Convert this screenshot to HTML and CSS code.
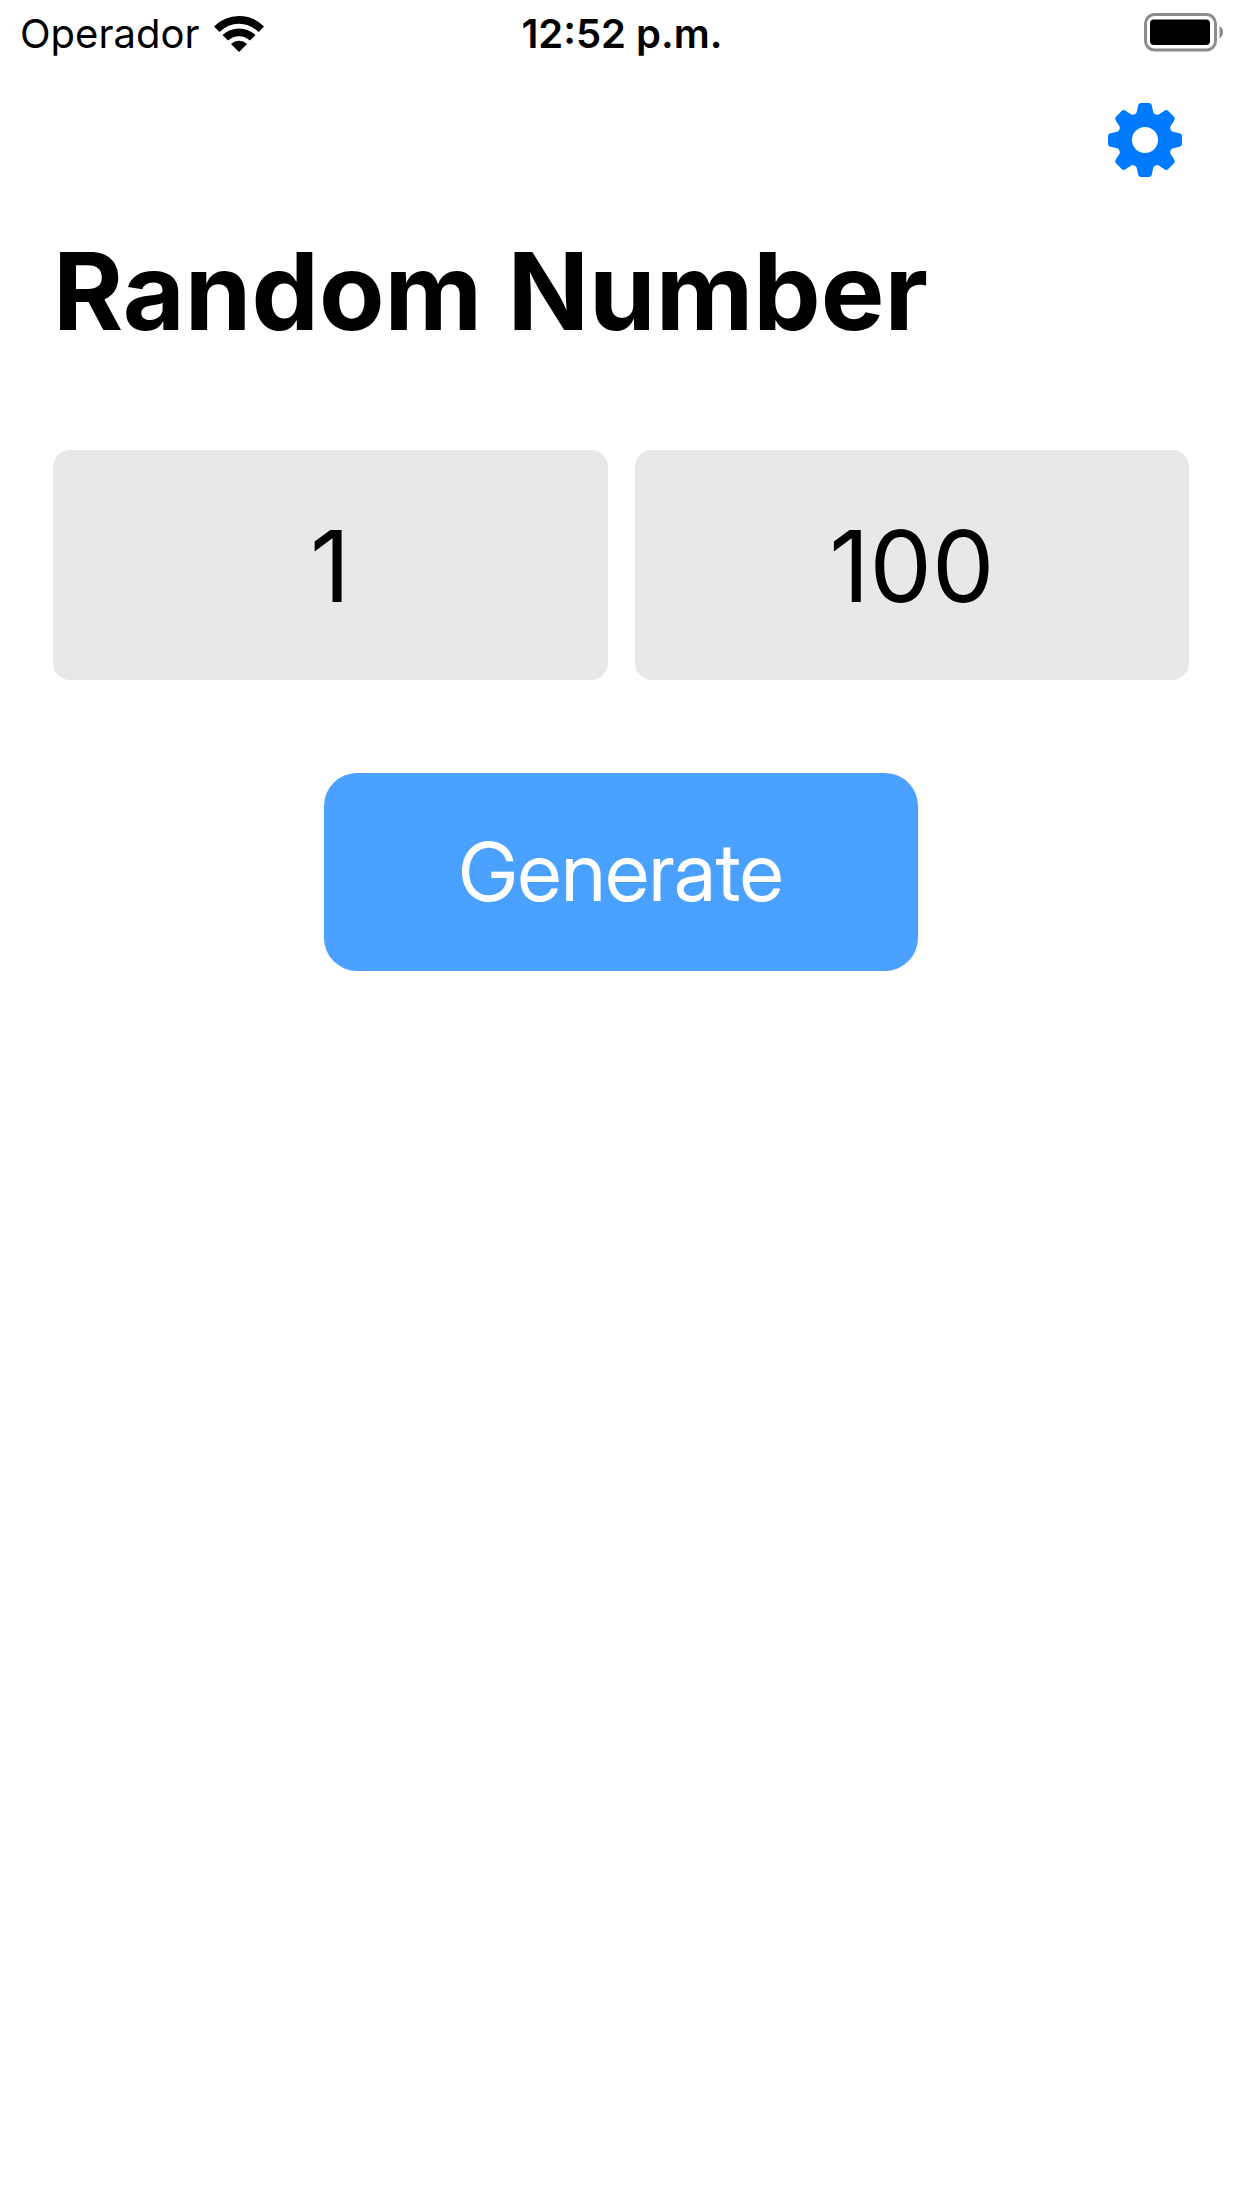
FILE: index.html
```html
<!DOCTYPE html>
<html lang="en">
<head>
  <meta charset="utf-8">
  <meta name="viewport" content="width=device-width, initial-scale=1">
  <title>Random Number</title>
  <link rel="stylesheet" href="styles.css">
</head>
<body>
  <header class="status-bar">
    <div class="carrier">
      <span>Operador</span>
      <svg class="wifi" viewBox="0 0 50 38" aria-hidden="true">
        <path d="M0 11.500 Q10.500 1 25 1 T50 11.500 L44.500 17 Q36 8.800 25 8.800 T5.500 17 Z"/>
        <path d="M8.500 20 Q15.500 13.500 25 13.500 T41.500 20 L36 25.500 Q31 21.200 25 21.200 T14 25.500 Z"/>
        <path d="M17 29 Q20.500 25.800 25 25.800 T33 29 L25 37 Z"/>
      </svg>
    </div>
    <time class="clock">12:52 p.m.</time>
    <svg class="battery" viewBox="0 0 80 42" role="img" aria-label="Battery full">
      <rect x="1.500" y="1.500" width="70" height="35.500" rx="9" fill="none" stroke="#8c8c8c" stroke-width="3"/>
      <rect x="6" y="6.500" width="60" height="25.500" rx="4"/>
      <path d="M75.500 13 Q79 15 79 19 T75.500 25.500 Z" fill="#8c8c8c"/>
    </svg>
  </header>

  <nav class="toolbar">
    <button class="settings" type="button" aria-label="Settings">
      <svg class="gear" viewBox="-37 -37 74 74" aria-hidden="true">
        <defs>
          <path id="tooth" d="M-12 -25 Q-8.500 -25.500 -8 -29 L-6.800 -34.800 Q-6.200 -37 -4 -37 H4 Q6.200 -37 6.800 -34.800 L8 -29 Q8.500 -25.500 12 -25 L8 -18 H-8 Z"/>
        </defs>
        <circle r="20" fill="none" stroke="currentColor" stroke-width="14"/>
        <g fill="currentColor">
          <use href="#tooth"/>
          <use href="#tooth" transform="rotate(45)"/>
          <use href="#tooth" transform="rotate(90)"/>
          <use href="#tooth" transform="rotate(135)"/>
          <use href="#tooth" transform="rotate(180)"/>
          <use href="#tooth" transform="rotate(225)"/>
          <use href="#tooth" transform="rotate(270)"/>
          <use href="#tooth" transform="rotate(315)"/>
        </g>
      </svg>
    </button>
  </nav>

  <main class="content">
    <h1 class="title">Random Number</h1>
    <form class="generator">
      <div class="range">
        <input class="bound" type="text" inputmode="numeric" aria-label="Minimum" value="1">
        <input class="bound" type="text" inputmode="numeric" aria-label="Maximum" value="100">
      </div>
      <button class="generate" type="button">Generate</button>
    </form>
  </main>
</body>
</html>
```

FILE: styles.css
```css
* {
  box-sizing: border-box;
}

body {
  margin: 0;
  background: #fff;
  color: #000;
  font-family: Inter, "Liberation Sans", sans-serif;
}

button,
input {
  margin: 0;
  border: 0;
  font: inherit;
}

.status-bar {
  display: grid;
  grid-template-columns: 1fr auto 1fr;
  align-items: center;
  height: 68px;
  padding: 0 18px 0 20px;
  font-size: 40px;
  line-height: 46px;
}

.carrier {
  display: flex;
  align-items: center;
  gap: 15px;
}

.wifi {
  width: 50px;
  height: 38px;
}

.clock {
  font-weight: 600;
}

.battery {
  justify-self: end;
  width: 80px;
  height: 42px;
}

.toolbar {
  display: flex;
  justify-content: flex-end;
  padding: 22px 47px 24px;
}

.settings {
  display: flex;
  padding: 13px;
  background: none;
  color: #007aff;
}

.gear {
  width: 74px;
  height: 74px;
}

.content {
  padding: 0 53px;
}

.title {
  margin: 0;
  padding: 12px 0 94px;
  font-size: 107px;
  font-weight: 700;
  line-height: 130px;
}

.generator {
  display: flex;
  flex-direction: column;
  align-items: center;
  gap: 93px;
}

.range {
  display: grid;
  grid-template-columns: 1fr 1fr;
  gap: 27px;
  width: 100%;
}

.bound {
  width: 100%;
  min-width: 0;
  height: 230px;
  padding: 2px 0 0;
  border-radius: 17px;
  background: #e8e8e8;
  color: #000;
  font-size: 99px;
  text-align: center;
}

.generate {
  min-width: 594px;
  padding: 48px 60px;
  border-radius: 33px;
  background: #4ba1ff;
  color: #fff;
  font-family: "Inter Display", Inter, "Liberation Sans", sans-serif;
  font-size: 81px;
  line-height: 102px;
}
```
